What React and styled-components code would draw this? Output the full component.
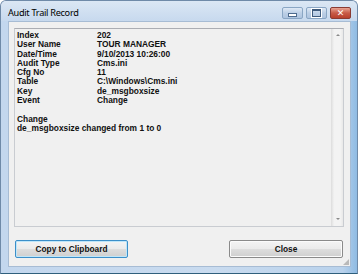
import React from "react";
import styled, { createGlobalStyle } from "styled-components";

const rows = [
  ["Index", "202"],
  ["User Name", "TOUR MANAGER"],
  ["Date/Time", "9/10/2013 10:26:00"],
  ["Audit Type", "Cms.ini"],
  ["Cfg No", "11"],
  ["Table", "C:\\Windows\\Cms.ini"],
  ["Key", "de_msgboxsize"],
  ["Event", "Change"],
];

const GlobalStyle = createGlobalStyle`
  html, body {
    margin: 0;
    padding: 0;
    background: #ffffff;
  }
`;

const Window = styled.div`
  width: 358px;
  height: 274px;
  box-sizing: border-box;
  display: flex;
  flex-direction: column;
  border: 1px solid #6f8aa8;
  border-bottom-color: #2f5f7c;
  border-radius: 6px 6px 0 0;
  background: linear-gradient(to right, #c3d7ee 0%, #c9dbef 60%, #b9d2ec 96%, #8fbbe3 100%);
  overflow: hidden;
`;

const TitleBar = styled.div`
  height: 20px;
  display: flex;
  align-items: flex-start;
  justify-content: space-between;
  padding: 0 6px 0 7px;
  background: linear-gradient(#dbe7f4, #c7d9ee);
`;

const Title = styled.div`
  font-family: "Noto Sans", sans-serif;
  font-size: 9.2px;
  letter-spacing: -0.3px;
  line-height: 24px;
  color: #000;
`;

const Caption = styled.div`
  display: flex;
  gap: 3px;
  margin-top: 6px;
`;

const CapBtn = styled.div`
  width: ${(p) => (p.$kind === "close" ? 21 : 21)}px;
  height: 12px;
  box-sizing: border-box;
  border: 1px solid ${(p) => (p.$kind === "close" ? "#8a3b33" : "#8aa6c4")};
  border-radius: 2px;
  display: flex;
  align-items: center;
  justify-content: center;
  background: ${(p) =>
    p.$kind === "close"
      ? "linear-gradient(#e8a493, #c85c48 50%, #b8402c)"
      : "linear-gradient(#dfe9f5, #bccfe6 50%, #aec4df)"};
`;

const MinGlyph = styled.div`
  width: 7px;
  height: 2px;
  margin-top: 4px;
  background: #ffffff;
  border: 1px solid #4e6b8e;
`;

const MaxGlyph = styled.div`
  width: 7px;
  height: 5px;
  border: 1px solid #3e5a7c;
  border-top-width: 2px;
  background: transparent;
  box-shadow: 0 0 0 1px #ffffff;
`;

const CloseGlyph = styled.div`
  font-family: "DejaVu Sans", sans-serif;
  font-weight: bold;
  font-size: 9px;
  line-height: 10px;
  color: #ffffff;
`;

const Client = styled.div`
  flex: 1;
  margin: 0 6px 6px 7px;
  display: flex;
  flex-direction: column;
  background: #f0f0f0;
  border: 1px solid #a7bcd4;
  position: relative;
`;

const TextBox = styled.div`
  margin: 6px 6px 0 5px;
  height: 199px;
  box-sizing: border-box;
  display: flex;
  border: 1px solid #c9ccd1;
  border-top-color: #abadb3;
  background: #f0f0f0;
`;

const Content = styled.div`
  flex: 1;
  padding: 2px 0 0 2px;
  font-family: "Liberation Sans", Arial, sans-serif;
  font-weight: bold;
  font-size: 8.4px;
  line-height: 9.3px;
  color: #111;
`;

const Row = styled.div`
  display: grid;
  grid-template-columns: 80px 1fr;
  white-space: nowrap;
`;

const Line = styled.div`
  white-space: nowrap;
  margin-top: ${(p) => (p.$gap ? "9.3px" : "0")};
`;

const ScrollBar = styled.div`
  width: 12px;
  display: flex;
  flex-direction: column;
  align-items: center;
  justify-content: space-between;
  padding: 5px 0 6px;
  box-sizing: border-box;
  background: linear-gradient(to right, #e4e4e4 0%, #f3f3f3 20%, #f3f3f3 75%, #e8e8e8 100%);
  border-left: 1px solid #e0e0e0;
`;

const Arrow = styled.div`
  width: 0;
  height: 0;
  border-left: 2.5px solid transparent;
  border-right: 2.5px solid transparent;
  ${(p) =>
    p.$down
      ? "border-top: 2.5px solid #8a8a8a;"
      : "border-bottom: 2.5px solid #8a8a8a;"}
`;

const ButtonRow = styled.div`
  display: flex;
  justify-content: space-between;
  margin: 13px 7px 0 6px;
`;

const DlgButton = styled.button`
  width: ${(p) => (p.$primary ? 113 : 114)}px;
  height: 18px;
  padding: 0;
  box-sizing: border-box;
  border-radius: 2px;
  border: 1px solid ${(p) => (p.$primary ? "#3c8fc9" : "#8a8a8a")};
  box-shadow: inset 0 0 0 1px ${(p) => (p.$primary ? "#bfe6f9" : "#fbfbfb")};
  background: linear-gradient(#f4f4f4 0%, #ebebeb 48%, #dddddd 52%, #cfcfcf 100%);
  font-family: "Liberation Sans", Arial, sans-serif;
  font-weight: bold;
  font-size: 8.3px;
  color: #111;
  cursor: pointer;
`;

const Grip = styled.div`
  position: absolute;
  right: 1px;
  bottom: 1px;
  width: 6px;
  height: 6px;
  background: radial-gradient(circle, #b8b8b8 0.7px, transparent 0.9px) 0 0 / 2px 2px;
  clip-path: polygon(100% 0, 100% 100%, 0 100%);
`;

export default function App() {
  return (
    <>
      <GlobalStyle />
      <Window>
        <TitleBar>
          <Title>Audit Trail Record</Title>
          <Caption>
            <CapBtn $kind="min">
              <MinGlyph />
            </CapBtn>
            <CapBtn $kind="max">
              <MaxGlyph />
            </CapBtn>
            <CapBtn $kind="close">
              <CloseGlyph>✕</CloseGlyph>
            </CapBtn>
          </Caption>
        </TitleBar>
        <Client>
          <TextBox>
            <Content>
              {rows.map(([label, value]) => (
                <Row key={label}>
                  <span>{label}</span>
                  <span>{value}</span>
                </Row>
              ))}
              <Line $gap>Change</Line>
              <Line>de_msgboxsize changed from 1 to 0</Line>
            </Content>
            <ScrollBar>
              <Arrow />
              <Arrow $down />
            </ScrollBar>
          </TextBox>
          <ButtonRow>
            <DlgButton $primary>Copy to Clipboard</DlgButton>
            <DlgButton>Close</DlgButton>
          </ButtonRow>
          <Grip />
        </Client>
      </Window>
    </>
  );
}
